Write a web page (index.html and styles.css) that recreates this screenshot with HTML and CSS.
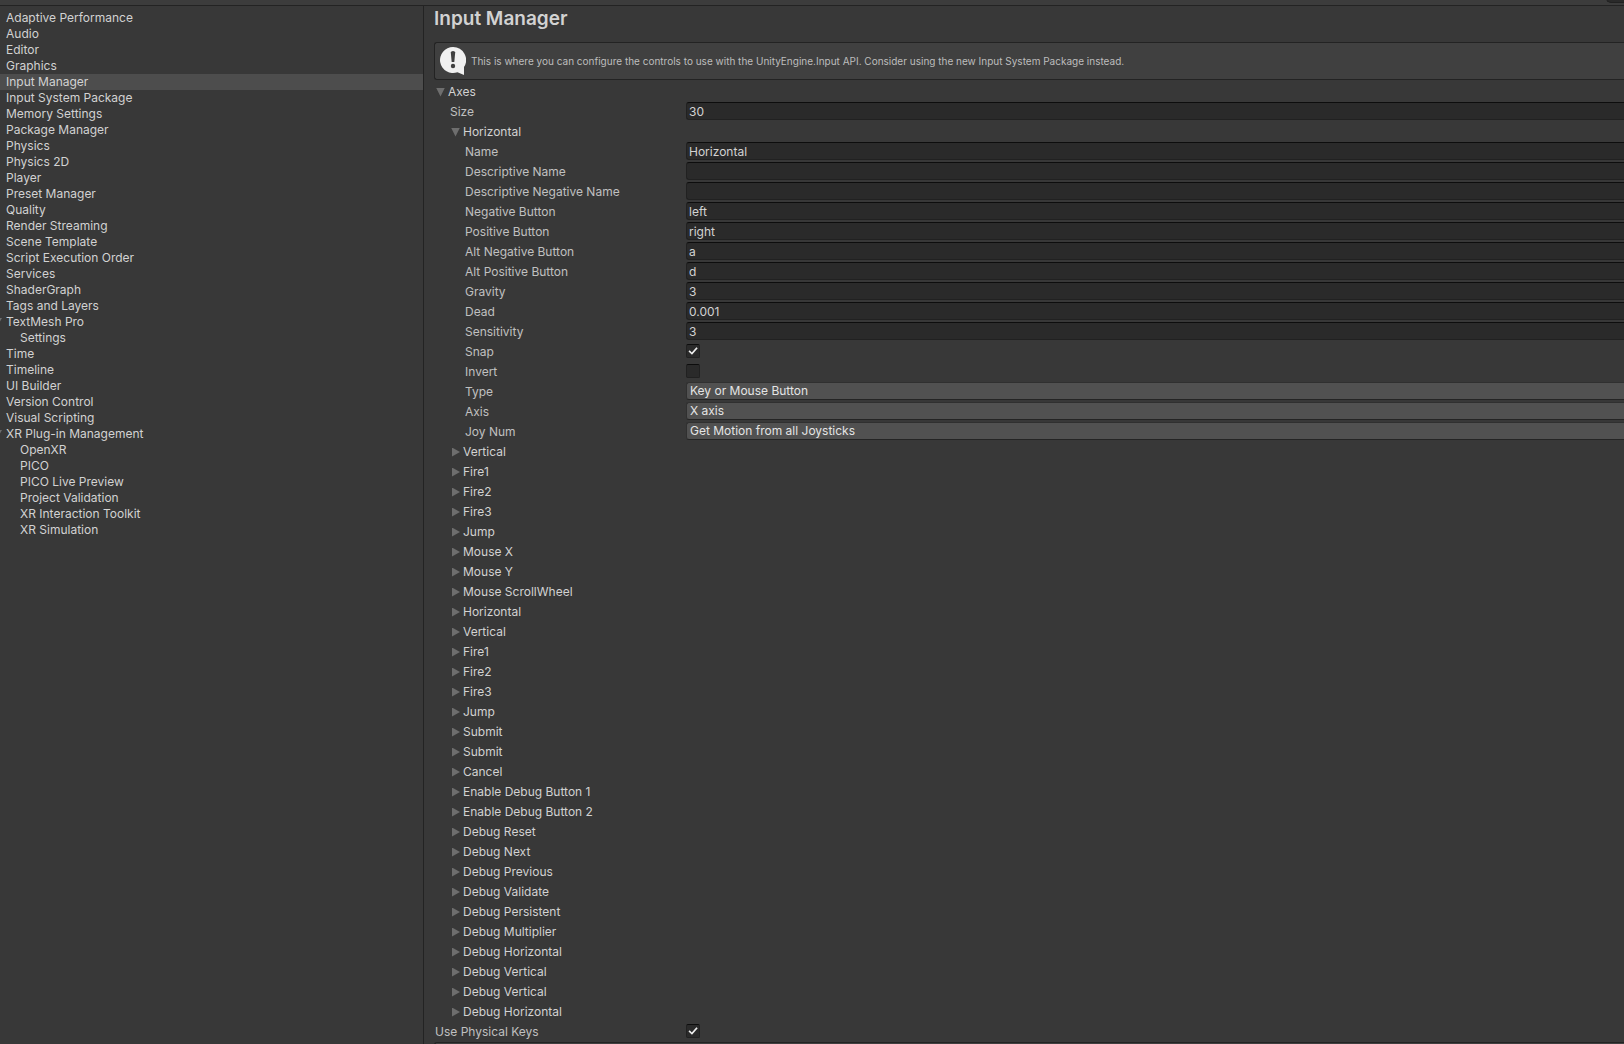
FILE: index.html
```html
<!DOCTYPE html>
<html lang="en">
<head>
<meta charset="utf-8">
<title>Project Settings</title>
<link rel="stylesheet" href="styles.css">
</head>
<body>
<header class="toolbar"><input class="search" type="search" aria-label="Search settings"></header>
<div class="window">
<nav class="sidebar" aria-label="Settings categories">
<a href="#">Adaptive Performance</a>
<a href="#">Audio</a>
<a href="#">Editor</a>
<a href="#">Graphics</a>
<a href="#" class="selected" aria-current="page">Input Manager</a>
<a href="#">Input System Package</a>
<a href="#">Memory Settings</a>
<a href="#">Package Manager</a>
<a href="#">Physics</a>
<a href="#">Physics 2D</a>
<a href="#">Player</a>
<a href="#">Preset Manager</a>
<a href="#">Quality</a>
<a href="#">Render Streaming</a>
<a href="#">Scene Template</a>
<a href="#">Script Execution Order</a>
<a href="#">Services</a>
<a href="#">ShaderGraph</a>
<a href="#">Tags and Layers</a>
<a href="#" class="parent">TextMesh Pro</a>
<a href="#" class="child">Settings</a>
<a href="#">Time</a>
<a href="#">Timeline</a>
<a href="#">UI Builder</a>
<a href="#">Version Control</a>
<a href="#">Visual Scripting</a>
<a href="#" class="parent">XR Plug-in Management</a>
<a href="#" class="child">OpenXR</a>
<a href="#" class="child">PICO</a>
<a href="#" class="child">PICO Live Preview</a>
<a href="#" class="child">Project Validation</a>
<a href="#" class="child">XR Interaction Toolkit</a>
<a href="#" class="child">XR Simulation</a>
</nav>
<main class="content">
<h1>Input Manager</h1>
<div class="help">
<svg width="26" height="28" viewBox="0 0 26 28" aria-hidden="true"><path fill="#f0f0f0" d="M13 0a13 13 0 1 0 4.500 25.200L24 28v-8A13 13 0 0 0 13 0z"/><path fill="#404040" d="M10.800 5.500q0-1.500 2.200-1.500t2.200 1.500l-.9 9.500h-2.600z"/><circle cx="13" cy="19" r="2.200" fill="#404040"/></svg>
<p>This is where you can configure the controls to use with the UnityEngine.Input API. Consider using the new Input System Package instead.</p>
</div>
<details class="axes" open>
<summary>Axes</summary>
<div class="row level1"><label for="size">Size</label><input id="size" type="text" value="30"></div>
<details class="axis" open>
<summary>Horizontal</summary>
<div class="row"><label for="name">Name</label><input id="name" type="text" value="Horizontal"></div>
<div class="row"><label for="desc">Descriptive Name</label><input id="desc" type="text"></div>
<div class="row"><label for="descneg">Descriptive Negative Name</label><input id="descneg" type="text"></div>
<div class="row"><label for="neg">Negative Button</label><input id="neg" type="text" value="left"></div>
<div class="row"><label for="pos">Positive Button</label><input id="pos" type="text" value="right"></div>
<div class="row"><label for="altneg">Alt Negative Button</label><input id="altneg" type="text" value="a"></div>
<div class="row"><label for="altpos">Alt Positive Button</label><input id="altpos" type="text" value="d"></div>
<div class="row"><label for="gravity">Gravity</label><input id="gravity" type="text" value="3"></div>
<div class="row"><label for="dead">Dead</label><input id="dead" type="text" value="0.001"></div>
<div class="row"><label for="sens">Sensitivity</label><input id="sens" type="text" value="3"></div>
<div class="row"><label for="snap">Snap</label><input id="snap" type="checkbox" checked></div>
<div class="row"><label for="invert">Invert</label><input id="invert" type="checkbox"></div>
<div class="row"><label for="type">Type</label><select id="type"><option>Key or Mouse Button</option></select></div>
<div class="row"><label for="axis">Axis</label><select id="axis"><option>X axis</option></select></div>
<div class="row"><label for="joy">Joy Num</label><select id="joy"><option>Get Motion from all Joysticks</option></select></div>
</details>
<details class="axis"><summary>Vertical</summary></details>
<details class="axis"><summary>Fire1</summary></details>
<details class="axis"><summary>Fire2</summary></details>
<details class="axis"><summary>Fire3</summary></details>
<details class="axis"><summary>Jump</summary></details>
<details class="axis"><summary>Mouse X</summary></details>
<details class="axis"><summary>Mouse Y</summary></details>
<details class="axis"><summary>Mouse ScrollWheel</summary></details>
<details class="axis"><summary>Horizontal</summary></details>
<details class="axis"><summary>Vertical</summary></details>
<details class="axis"><summary>Fire1</summary></details>
<details class="axis"><summary>Fire2</summary></details>
<details class="axis"><summary>Fire3</summary></details>
<details class="axis"><summary>Jump</summary></details>
<details class="axis"><summary>Submit</summary></details>
<details class="axis"><summary>Submit</summary></details>
<details class="axis"><summary>Cancel</summary></details>
<details class="axis"><summary>Enable Debug Button 1</summary></details>
<details class="axis"><summary>Enable Debug Button 2</summary></details>
<details class="axis"><summary>Debug Reset</summary></details>
<details class="axis"><summary>Debug Next</summary></details>
<details class="axis"><summary>Debug Previous</summary></details>
<details class="axis"><summary>Debug Validate</summary></details>
<details class="axis"><summary>Debug Persistent</summary></details>
<details class="axis"><summary>Debug Multiplier</summary></details>
<details class="axis"><summary>Debug Horizontal</summary></details>
<details class="axis"><summary>Debug Vertical</summary></details>
<details class="axis"><summary>Debug Vertical</summary></details>
<details class="axis"><summary>Debug Horizontal</summary></details>
</details>
<div class="row level0"><label for="physical">Use Physical Keys</label><input id="physical" type="checkbox" checked></div>
<div class="footer-box"></div>
</main>
</div>
</body>
</html>
```
FILE: styles.css
```css
* {
  box-sizing: border-box;
}

body {
  margin: 0;
  height: 100vh;
  display: flex;
  flex-direction: column;
  overflow: hidden;
  background: #383838;
  color: #d2d2d2;
  font: 12px/16px Inter, "Liberation Sans", sans-serif;
}

.toolbar {
  flex: none;
  display: flex;
  justify-content: flex-end;
  align-items: flex-end;
  height: 6px;
  padding-bottom: 2px;
  overflow: hidden;
  background: #3c3c3c;
  border-bottom: 1px solid #232323;
}

.search {
  flex: none;
  width: 18px;
  height: 16px;
  padding: 0;
  background: #2a2a2a;
  border: 1px solid #212121;
  border-right: 0;
  border-radius: 5px 0 0 5px;
}

.window {
  flex: 1;
  min-height: 0;
  display: flex;
}

.sidebar {
  flex: none;
  width: 424px;
  padding-top: 4px;
  overflow: hidden;
  border-right: 1px solid #232323;
}

.sidebar a {
  display: block;
  height: 16px;
  padding-left: 6px;
  color: inherit;
  text-decoration: none;
}

.sidebar .selected {
  background: #4d4d4d;
}

.sidebar .child {
  padding-left: 20px;
}

.sidebar .parent {
  position: relative;
}

.sidebar .parent::before {
  content: "";
  position: absolute;
  left: -6px;
  top: 4px;
  border: 4px solid transparent;
  border-top: 7px solid #6e6e6e;
  border-bottom: 0;
}

.content {
  flex: 1;
  min-width: 0;
  padding-left: 10px;
  overflow: auto;
  scrollbar-width: none;
}

h1 {
  margin: 0 0 10px;
  font-size: 19px;
  line-height: 26px;
  font-weight: 600;
}

.help {
  display: flex;
  align-items: center;
  gap: 5px;
  height: 38px;
  margin-bottom: 2px;
  padding-left: 5px;
  background: #404040;
  border: 1px solid #232323;
  border-right: 0;
  border-radius: 3px 0 0 3px;
}

.help p {
  margin: 0;
  color: #bdbdbd;
  font-size: 10px;
}

summary {
  display: flex;
  align-items: center;
  gap: 3px;
  height: 18px;
  margin-bottom: 2px;
  padding: 2px 0 0 2px;
  list-style: none;
}

summary::before {
  content: "";
  width: 9px;
  height: 9px;
  background: #6e6e6e;
  clip-path: polygon(1px 0, 100% 50%, 1px 100%);
}

details[open] > summary::before {
  clip-path: polygon(0 0, 100% 0, 50% 100%);
}

.axis > summary {
  padding-left: 17px;
}

.row {
  display: flex;
  align-items: center;
  height: 18px;
  margin-bottom: 2px;
}

.row label {
  flex: none;
  width: 252px;
  padding: 2px 0 0 31px;
  color: #c0c0c0;
}

.row.level1 label {
  padding-left: 16px;
}

.row.level0 label {
  padding-left: 1px;
}

.row input[type="text"],
.row select {
  flex: 1;
  min-width: 0;
  height: 18px;
  margin: 0;
  font: inherit;
  color: #d2d2d2;
  border: 1px solid #212121;
  border-right: 0;
  border-radius: 3px 0 0 3px;
  outline: 0;
}

.row input[type="text"] {
  padding: 1px 2px 0;
  background: #2a2a2a;
  border-top-color: #0d0d0d;
}

.row select {
  appearance: none;
  padding: 0 3px;
  color: #e4e4e4;
  background: #515151;
  border-color: #303030;
  border-bottom-color: #242424;
}

.row input[type="checkbox"] {
  appearance: none;
  display: grid;
  place-items: center;
  width: 14px;
  height: 14px;
  margin: 0;
  background: #2a2a2a;
  border: 1px solid #212121;
  border-top-color: #0d0d0d;
  border-radius: 2px;
}

.row input[type="checkbox"]:checked::before {
  content: "";
  width: 10px;
  height: 8px;
  background: #f0f0f0;
  clip-path: polygon(5% 55%, 17% 42%, 38% 69%, 84% 4%, 97% 16%, 40% 96%);
}

.footer-box {
  height: 40px;
  border: 1px solid #232323;
  border-right: 0;
  border-radius: 3px 0 0 3px;
  background: #404040;
}
```
